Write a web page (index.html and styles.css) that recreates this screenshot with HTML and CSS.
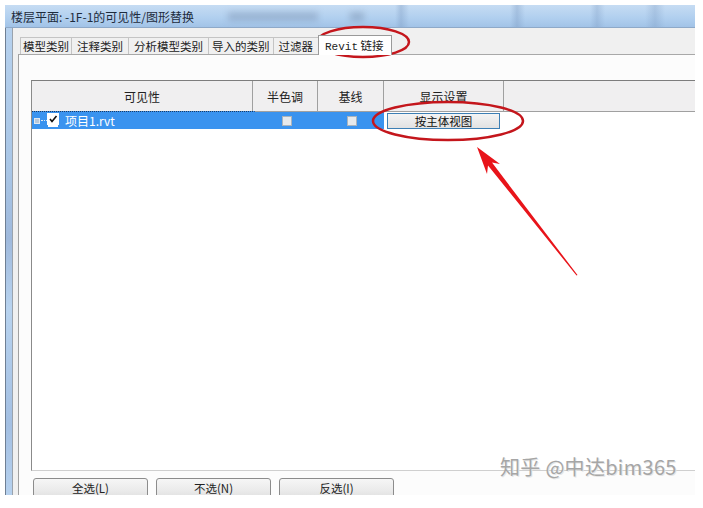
FILE: index.html
```html
<!doctype html>
<html lang="zh-CN">
<head>
  <meta charset="utf-8">
  <meta name="viewport" content="width=device-width, initial-scale=1">
  <title>楼层平面: -1F-1的可见性/图形替换</title>
  <link rel="stylesheet" href="styles.css">
</head>
<body>
<div class="window">
  <div class="titlebar">
    <span class="title">楼层平面: -1F-1的可见性/图形替换</span>
    <span class="blur"></span>
    <span class="blur small"></span>
  </div>
  <div class="frame">
    <div class="frame-edge"></div>
    <div class="dialog">
      <div class="tabs">
        <div class="tab">模型类别</div>
        <div class="tab">注释类别</div>
        <div class="tab">分析模型类别</div>
        <div class="tab">导入的类别</div>
        <div class="tab">过滤器</div>
        <div class="tab active"><span class="mono">Revit</span> 链接</div>
      </div>
      <div class="panel">
        <div class="grid">
          <div class="grid-head">
            <div class="col c1">可见性</div>
            <div class="col c2">半色调</div>
            <div class="col c3">基线</div>
            <div class="col c4">显示设置</div>
            <div class="col c5"></div>
          </div>
          <div class="grid-row">
            <div class="cell c1 sel focus">
              <span class="expander"></span>
              <span class="dots"></span>
              <span class="check on">
                <svg width="10" height="10" viewBox="0 0 10 10"><path d="M2 5 L4 7.5 L8.5 2" fill="none" stroke="#111" stroke-width="1.6"/></svg>
              </span>
              <span class="name">项目1.rvt</span>
            </div>
            <div class="cell c2 sel"><span class="check"></span></div>
            <div class="cell c3 sel"><span class="check"></span></div>
            <div class="cell c4"><div class="cell-btn">按主体视图</div></div>
          </div>
        </div>
        <div class="buttons">
          <div class="btn">全选(L)</div>
          <div class="btn">不选(N)</div>
          <div class="btn">反选(I)</div>
        </div>
      </div>
    </div>
  </div>
</div>

<svg class="marks" width="703" height="508" viewBox="0 0 703 508">
  <ellipse cx="363" cy="42" rx="46" ry="15" fill="none" stroke="#c4161c" stroke-width="2.5"/>
  <ellipse cx="448" cy="121" rx="75" ry="19" fill="none" stroke="#c4161c" stroke-width="2.5"/>
  <polygon points="477,147 500,164 492,162.6 577.5,275 576.5,275.5 488,165.4 487,174" fill="#e8141a"/>
</svg>

<div class="watermark">知乎 @中达bim365</div>
</body>
</html>
```

FILE: styles.css
```css
body {
  margin: 0;
  background-color: #fff;
  font-family: "Noto Sans CJK SC", "Noto Sans", sans-serif;
  font-size: 12px;
  color: #1a1a1a;
  width: 703px;
  height: 508px;
  overflow: hidden;
  position: relative;
}

.window {
  margin: 5px 0 0 5px;
  width: 690px;
  height: 490px;
  display: flex;
  flex-direction: column;
  overflow: hidden;
}

.titlebar {
  height: 22px;
  flex: none;
  display: flex;
  align-items: center;
  padding-left: 6px;
  border-bottom: 1px solid #8ea9c8;
  background:
    linear-gradient(90deg, transparent 0, transparent 390px, rgba(120, 150, 190, 0.35) 396px, transparent 404px,
      transparent 505px, rgba(120, 150, 190, 0.35) 512px, transparent 520px,
      transparent 585px, rgba(120, 150, 190, 0.3) 592px, transparent 600px,
      transparent 640px, rgba(120, 150, 190, 0.3) 650px, transparent 660px),
    linear-gradient(180deg, #c6dcf3 0, #b0cfef 60%, #a2c3e7 100%);
}

.title {
  color: #1d2b3c;
  font-size: 12px;
  white-space: nowrap;
}

.blur {
  width: 90px;
  height: 9px;
  margin-left: 34px;
  background-color: rgba(110, 130, 160, 0.35);
  filter: blur(3px);
}

.blur.small {
  width: 14px;
  margin-left: 32px;
  background-color: rgba(90, 110, 140, 0.3);
}

.frame {
  flex: 1;
  display: flex;
  min-height: 0;
}

.frame-edge {
  width: 6px;
  flex: none;
  border-left: 1px solid #6f7f93;
  background: linear-gradient(180deg, #b6d1ee 0, #a9c6e6 30%, #9fb9dc 45%, #b8d3ef 60%, #a3bfe2 85%, #b6d1ee 100%);
}

.dialog {
  flex: 1;
  display: flex;
  flex-direction: column;
  background-color: #f0f0f0;
  border-left: 1px solid #9aa3ad;
  padding: 9px 0 0 5px;
  min-width: 0;
}

.tabs {
  display: flex;
  height: 17px;
  margin-left: 2px;
  position: relative;
  z-index: 1;
}

.tab {
  height: 16px;
  line-height: 16px;
  padding: 0 3px;
  font-size: 11.5px;
  color: #222;
  background-color: #f0f0f0;
  border: 1px solid #c4c4c4;
  border-bottom: none;
  border-left: none;
  white-space: nowrap;
}

.tab:first-child {
  border-left: 1px solid #c4c4c4;
  padding: 0 2px;
}

.tab:nth-child(2),
.tab:nth-child(3),
.tab:nth-child(5) {
  padding: 0 5px;
}

.tab.active {
  height: 19px;
  line-height: 19px;
  margin-top: -2px;
  padding: 0 7px 0 6px;
  background-color: #fff;
  border-color: #9a9a9a;
  border-left: 1px solid #9a9a9a;
  margin-left: -1px;
}

.mono {
  font-family: "Liberation Mono", monospace;
  font-size: 11px;
}

.panel {
  flex: 1;
  background-color: #fcfcfc;
  border-top: 1px solid #a8a8a8;
  border-left: 1px solid #a0a0a0;
  padding: 25px 0 0 12px;
  min-height: 0;
}

.grid {
  height: 389px;
  background-color: #fff;
  border-top: 1px solid #7d7d7d;
  border-left: 1px solid #8a8a8a;
  border-bottom: 1px solid #cfcfcf;
}

.grid-head {
  display: flex;
  height: 30px;
  background-color: #f0eff0;
  border-bottom: 1px solid #a0a0a0;
}

.col {
  display: flex;
  align-items: center;
  justify-content: center;
  font-size: 12px;
  color: #222;
  border-right: 1px solid #a0a0a0;
}

.c1 { width: 220px; }
.c2 { width: 64px; }
.c3 { width: 65px; }
.c4 { width: 119px; }
.c5 { flex: 1; border-right: none; }

.grid-row {
  display: flex;
  height: 17px;
}

.cell {
  display: flex;
  align-items: center;
  justify-content: center;
  border-right: 1px solid transparent;
}

.cell.sel {
  background-color: #3a93ef;
}

.cell.c3.sel {
  width: 63px;
  margin-right: 3px;
}

.cell.focus {
  justify-content: flex-start;
  padding-left: 2px;
  border-top: 1px dotted #1b3a63;
  margin-top: -1px;
}

.expander {
  width: 4px;
  height: 4px;
  border: 1px solid #dfe8f2;
  background-color: #b8c8da;
}

.dots {
  width: 6px;
  margin-left: 1px;
  border-top: 1px dotted #dfe8f2;
}

.check {
  width: 8px;
  height: 8px;
  background-color: #e6e9ec;
  border: 1px solid #a9b3bd;
  display: inline-flex;
}

.check.on {
  width: 10px;
  height: 10px;
  margin-top: -3px;
  background-color: #fff;
  border-color: #fff;
  box-shadow: 0 3px 0 -1px #fff;
}

.name {
  margin-left: 6px;
  color: #fff;
  font-size: 12px;
}

.cell-btn {
  width: 112px;
  height: 14px;
  line-height: 14px;
  text-align: center;
  border: 1px solid #3d7fb4;
  background: linear-gradient(180deg, #f4f4f4, #e2e2e2);
  font-size: 11.5px;
  color: #111;
  margin-right: 6px;
}

.buttons {
  display: flex;
  gap: 8px;
  margin-top: 7px;
  padding-left: 2px;
}

.btn {
  width: 113px;
  height: 22px;
  line-height: 18px;
  text-align: center;
  font-size: 11.5px;
  color: #222;
  border: 1px solid #8c8c8c;
  border-radius: 3px;
  background: linear-gradient(180deg, #f6f6f6 0, #ebebeb 50%, #dcdcdc 100%);
}

.marks {
  position: absolute;
  left: 0;
  top: 0;
  pointer-events: none;
}

.watermark {
  position: absolute;
  left: 500px;
  top: 452px;
  font-size: 20px;
  color: #a6a6a6;
  text-shadow: 1px 1px 0 #e6e6e6;
  letter-spacing: 0.3px;
}
```
